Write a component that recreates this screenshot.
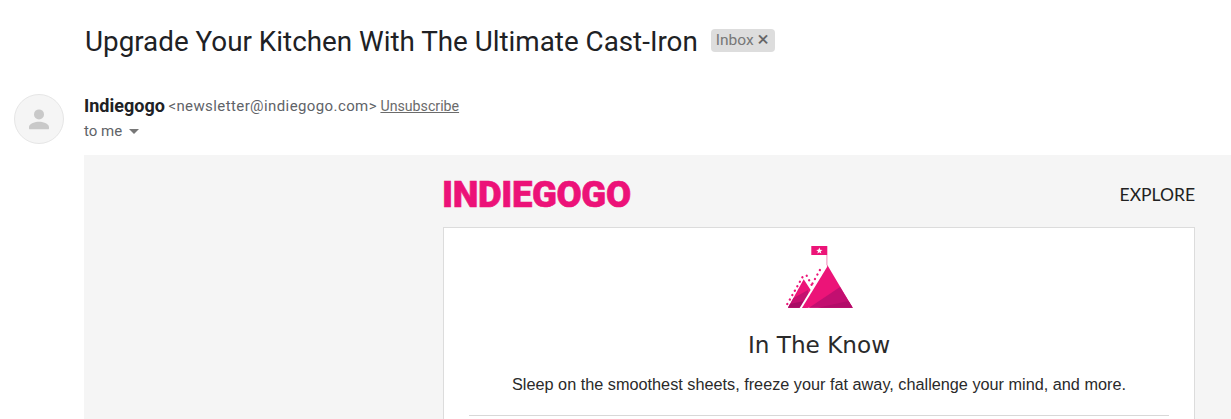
<div class="page">
  <header class="subject">
    <h1>Upgrade Your Kitchen With The Ultimate Cast-Iron</h1>
    <span class="label">Inbox <span class="x">×</span></span>
  </header>

  <div class="message">
    <div class="avatar">
      <svg viewBox="0 0 24 24" width="30" height="30" aria-hidden="true">
        <circle cx="12" cy="8.3" r="4" fill="#c9c9c9" />
        <path d="M4 19.5v-1.2c0-2.8 5.3-4.2 8-4.2s8 1.4 8 4.2v1.2c0 .4-.3.7-.7.7H4.7c-.4 0-.7-.3-.7-.7z" fill="#c9c9c9" />
      </svg>
    </div>

    <div class="main">
      <div class="sender">
        <strong>Indiegogo</strong>
        <span class="addr">&lt;newsletter@indiegogo.com&gt;</span>
        <a href="#top">Unsubscribe</a>
      </div>
      <div class="to">to me <span class="caret"></span></div>

      <section class="mail">
        <div class="column">
          <div class="brand">
            <span class="logo">INDIEGOGO</span>
            <span class="explore">EXPLORE</span>
          </div>
          <div class="card">
            <svg class="mountain" viewBox="15 10 70 65" width="70" height="65" aria-hidden="true">
              <rect x="41.3" y="11" width="16" height="9" fill="#ec1478" />
              <polygon points="49.3,12.6 50.2,14.8 52.5,14.9 50.7,16.3 51.3,18.5 49.3,17.3 47.4,18.5 48,16.3 46.2,14.9 48.4,14.8" fill="#fff" />
              <rect x="56.4" y="20" width="1" height="10" fill="#f08abc" />
              <polygon points="33.7,44.3 42,57 36,72.7 18,72.7" fill="#ec1478" />
              <polygon points="23.5,63 38,55 38,72.7 18,72.7" fill="#c4106f" />
              <polygon points="20,69 34,66 33,72.7 18,72.7" fill="#a80c64" />
              <polygon points="57.3,30 82.7,72.7 31.7,72.7" fill="#ec1478" />
              <polygon points="70,52 82.7,72.7 39,72.7" fill="#c20f70" />
              <polygon points="78.5,66 82.7,72.7 48,72.7" fill="#b20d69" />
              <path d="M56.5 31 L30.2 74" stroke="#fff" stroke-width="2" fill="none" />
              <path d="M17.3 69 L33.3 40.7 M36.7 40.7 L41.7 50 M42.5 48.5 L51.7 31.7" stroke="#ec1478" stroke-width="2.3" stroke-linecap="round" stroke-dasharray="0.1 5" fill="none" />
            </svg>
            <h2>In The Know</h2>
            <p>Sleep on the smoothest sheets, freeze your fat away, challenge your mind, and more.</p>
            <hr />
          </div>
        </div>
      </section>
    </div>
  </div>
</div>

<style>
  :global(body) {
    margin: 0;
    background: #fff;
  }
  .page {
    height: 419px;
    overflow: hidden;
    font-family: Roboto, "Liberation Sans", sans-serif;
    color: #222;
  }
  .subject {
    display: flex;
    align-items: center;
    gap: 13px;
    height: 82px;
    padding-left: 85px;
  }
  h1 {
    margin: 0;
    font-size: 27.8px;
    font-weight: 400;
    color: #202124;
    white-space: nowrap;
  }
  .label {
    background: #dddddd;
    color: #777;
    border-radius: 4px;
    font-size: 15.5px;
    height: 23px;
    line-height: 23px;
    padding: 0 6px 0 5px;
    white-space: nowrap;
    position: relative;
    top: -1px;
  }
  .x {
    color: #666;
    font-size: 21px;
    line-height: 18px;
    vertical-align: -1px;
  }
  .message {
    display: flex;
    padding-top: 12px;
  }
  .avatar {
    width: 50px;
    height: 50px;
    box-sizing: border-box;
    margin-left: 14px;
    margin-right: 20px;
    border-radius: 50%;
    background: #f5f5f5;
    border: 1px solid #e6e6e6;
    display: flex;
    align-items: center;
    justify-content: center;
    flex: none;
  }
  .main {
    flex: 1;
    min-width: 0;
  }
  .sender {
    font-size: 14.2px;
    height: 26px;
    line-height: 23px;
    white-space: nowrap;
  }
  .sender strong {
    font-size: 18px;
    font-weight: 700;
    color: #202124;
  }
  .addr {
    font-size: 15px;
    color: #5f6368;
    letter-spacing: 0.4px;
    vertical-align: 1px;
  }
  .sender a {
    color: #6b6b6b;
    vertical-align: 1px;
  }
  .to {
    font-size: 15px;
    color: #5f6368;
    height: 35px;
    line-height: 22px;
  }
  .caret {
    display: inline-block;
    width: 0;
    height: 0;
    margin-left: 3px;
    vertical-align: 2px;
    border-left: 5.5px solid transparent;
    border-right: 5.5px solid transparent;
    border-top: 5px solid #777;
  }
  .mail {
    background: #f5f5f5;
    height: 264px;
    padding: 0 36px 0 359px;
  }
  .brand {
    display: flex;
    justify-content: space-between;
    align-items: center;
    box-sizing: border-box;
    height: 72px;
    padding-top: 6px;
  }
  .logo {
    font-weight: 900;
    font-size: 36.5px;
    letter-spacing: -0.35px;
    color: #ec1278;
    -webkit-text-stroke: 0.6px #ec1278;
    margin-left: -1px;
  }
  .explore {
    font-family: Lato, Roboto, sans-serif;
    font-size: 17.5px;
    color: #222;
  }
  .card {
    background: #fff;
    border: 1px solid #dcdcdc;
    border-bottom: none;
    height: 192px;
    box-sizing: border-box;
    display: flex;
    flex-direction: column;
    align-items: center;
    padding: 17px 25px 0;
  }
  .mountain {
    display: block;
    margin-left: 2px;
  }
  h2 {
    margin: 21px 0 0;
    font-family: "DejaVu Sans", sans-serif;
    font-size: 23.15px;
    font-weight: 400;
    line-height: 28px;
    color: #2a2a2a;
  }
  p {
    margin: 15px 0 0;
    font-family: "Liberation Sans", Arial, sans-serif;
    font-size: 16.26px;
    line-height: 20px;
    color: #2a2a2a;
    white-space: nowrap;
  }
  hr {
    align-self: stretch;
    margin: 21px 0 0;
    border: none;
    border-top: 1px solid #d8d8d8;
  }
</style>
